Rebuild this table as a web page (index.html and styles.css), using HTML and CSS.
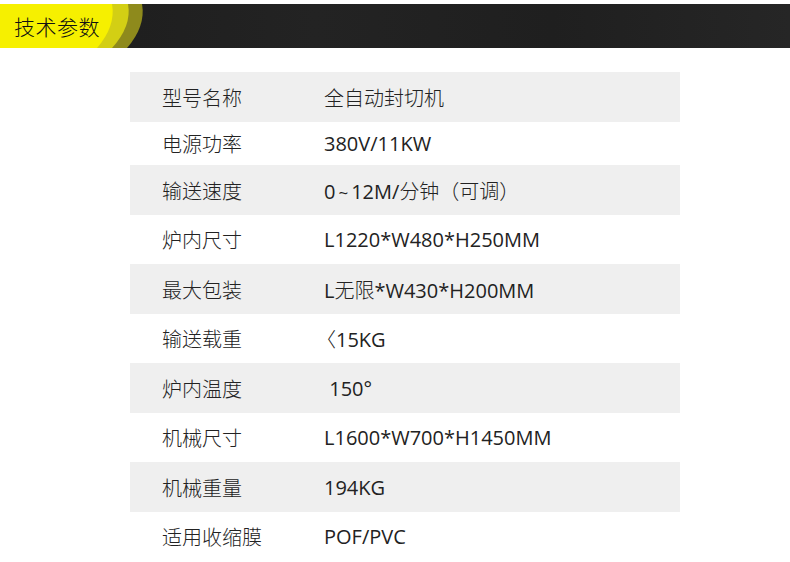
FILE: index.html
```html
<!DOCTYPE html>
<html lang="zh">
<head>
<meta charset="utf-8">
<link rel="stylesheet" href="styles.css">
</head>
<body>
<div class="page">
  <div class="header">
    <svg class="badge" width="150" height="44" viewBox="0 0 150 44">
      <path d="M0,0 H142 Q146,22 127,44 H0 Z" fill="#8e8a1c"/>
      <path d="M0,0 H128 Q132,22 112,44 H0 Z" fill="#d3cf14"/>
      <path d="M0,0 H112 Q116,22 97,44 H0 Z" fill="#f6f000"/>
    </svg>
    <div class="title">技术参数</div>
  </div>
  <div class="table">
    <div class="row alt"><span class="k">型号名称</span><span class="v"><span class="cn">全自动封切机</span></span></div>
    <div class="row short"><span class="k">电源功率</span><span class="v">380V/11KW</span></div>
    <div class="row alt"><span class="k">输送速度</span><span class="v">0<span class="tilde">~</span>12M/<span class="cn">分钟（可调）</span></span></div>
    <div class="row"><span class="k">炉内尺寸</span><span class="v">L1220*W480*H250MM</span></div>
    <div class="row alt"><span class="k">最大包装</span><span class="v">L<span class="cn">无限</span>*W430*H200MM</span></div>
    <div class="row"><span class="k">输送载重</span><span class="v"><span class="ang">〈</span>15KG</span></div>
    <div class="row alt"><span class="k">炉内温度</span><span class="v">&nbsp;150°</span></div>
    <div class="row"><span class="k">机械尺寸</span><span class="v">L1600*W700*H1450MM</span></div>
    <div class="row alt"><span class="k">机械重量</span><span class="v">194KG</span></div>
    <div class="row"><span class="k">适用收缩膜</span><span class="v">POF/PVC</span></div>
  </div>
</div>
</body>
</html>
```
FILE: styles.css
```css
* { box-sizing: border-box; }
html, body { margin: 0; padding: 0; background: #fff; }
body {
  font-family: "Open Sans", "Noto Sans CJK SC", sans-serif;
  color: #222;
  width: 790px;
  height: 562px;
  overflow: hidden;
}
.page { padding-top: 4px; }
.header {
  height: 44px;
  display: grid;
  background: linear-gradient(90deg, #1c1c1c 0%, #232323 40%, #1f1f1f 70%, #262626 100%);
}
.badge, .title { grid-area: 1 / 1; }
.badge { display: block; }
.title {
  font-family: "Noto Sans CJK SC", sans-serif;
  font-weight: 300;
  font-size: 21px;
  line-height: 44px;
  padding-left: 14px;
  color: #111;
  letter-spacing: 0.5px;
}
.table {
  margin: 24px 0 0 130px;
  width: 550px;
}
.row {
  height: 49px;
  display: flex;
  align-items: center;
  font-size: 20px;
  color: #222;
}
.row.alt { height: 50px; background: #efefef; }
.row.short { height: 43px; }
.k {
  width: 194px;
  padding-left: 32px;
  font-family: "Noto Sans CJK SC", sans-serif;
  font-weight: 300;
}
.v { flex: 1; font-weight: 400; }
.cn { font-family: "Noto Sans CJK SC", sans-serif; font-weight: 300; }
.tilde { margin: 0 3px; font-size: 17px; }
.ang { font-family: "Noto Sans CJK SC", sans-serif; font-weight: 300; margin-left: -8px; }
```
